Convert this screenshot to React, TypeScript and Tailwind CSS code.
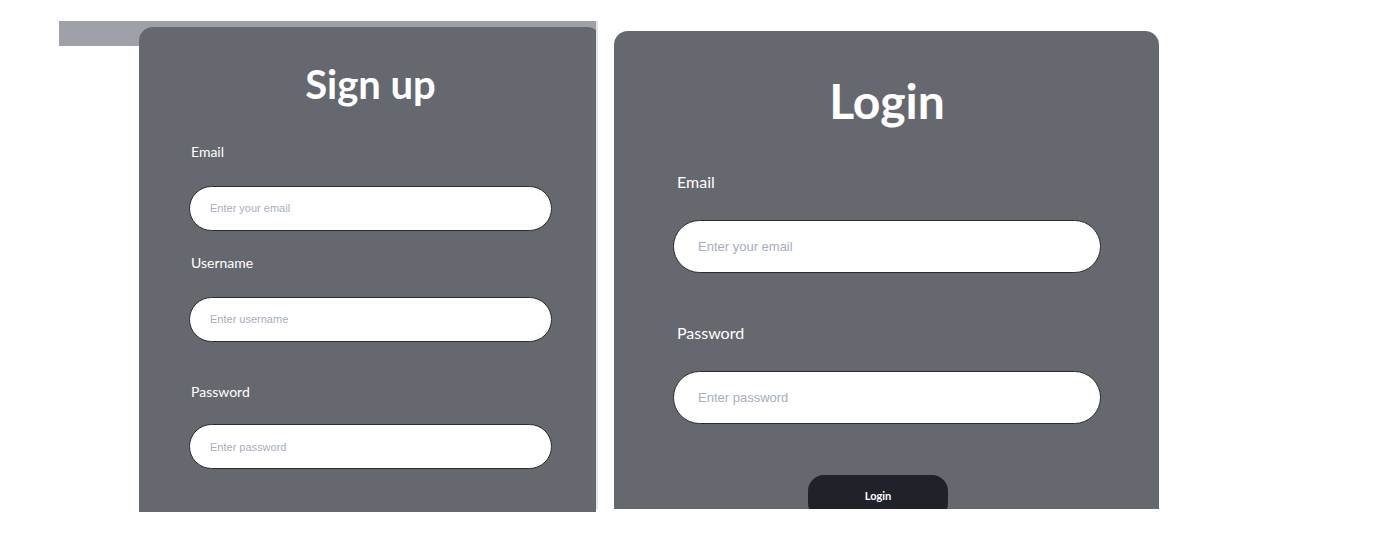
import React from "react";

const lato = { fontFamily: "Lato, 'Noto Sans', sans-serif" };

export default function App() {
  return (
    <div className="min-h-[542px] w-[1381px] bg-white flex items-start pl-[59px] pt-[21px]" style={lato}>
      {/* Sign up panel (cropped screenshot) */}
      <div className="w-[537px] h-[491px] overflow-hidden flex flex-col shrink-0">
        <div className="h-[25px] w-full bg-[#9ea2a8] shrink-0" />
        <div className="ml-[80px] -mt-[19px] w-[462px] flex-1 bg-[#66686f] rounded-tl-[14px] rounded-tr-[14px] flex flex-col pt-[33px] pl-[50px] pr-[49px] font-['Lato',sans-serif]">
          <h1 className="shrink-0 text-center text-white font-bold text-[40px] leading-[1.2] m-0">Sign up</h1>
          <label className="shrink-0 mt-[36px] ml-[2px] text-white text-[14px] leading-[1.2]">Email</label>
          <input
            readOnly
            placeholder="Enter your email"
            className="shrink-0 mt-[25px] h-[45px] w-[363px] rounded-full bg-white border-[1.5px] border-[#2b2c30] pl-[20px] text-[11px] outline-none placeholder:text-[#a6aebd] font-['Liberation_Sans',Arial,sans-serif]"
          />
          <label className="shrink-0 mt-[24px] ml-[2px] text-white text-[14px] leading-[1.2]">Username</label>
          <input
            readOnly
            placeholder="Enter username"
            className="shrink-0 mt-[25px] h-[45px] w-[363px] rounded-full bg-white border-[1.5px] border-[#2b2c30] pl-[20px] text-[11px] outline-none placeholder:text-[#a6aebd] font-['Liberation_Sans',Arial,sans-serif]"
          />
          <label className="shrink-0 mt-[42px] ml-[2px] text-white text-[14px] leading-[1.2]">Password</label>
          <input
            readOnly
            placeholder="Enter password"
            className="shrink-0 mt-[24px] h-[45px] w-[363px] rounded-full bg-white border-[1.5px] border-[#2b2c30] pl-[20px] text-[11px] outline-none placeholder:text-[#a6aebd] font-['Liberation_Sans',Arial,sans-serif]"
          />
        </div>
      </div>

      <div className="w-[2px] h-[488px] bg-[#e4e5e7] shrink-0" />

      {/* Login panel */}
      <div className="ml-[16px] mt-[10px] w-[545px] h-[478px] overflow-hidden rounded-t-[14px] bg-[#66686f] flex flex-col pt-[41px] pl-[59px] shrink-0 font-['Lato',sans-serif]">
        <h1 className="shrink-0 text-center text-white font-bold text-[48px] leading-[1.2] m-0 w-[428px]">Login</h1>
        <label className="shrink-0 mt-[42px] ml-[4px] text-white text-[16px] leading-[1.2]">Email</label>
        <input
          readOnly
          placeholder="Enter your email"
          className="shrink-0 mt-[29px] h-[53px] w-[428px] rounded-full bg-white border-[1.5px] border-[#2b2c30] pl-[24px] text-[13px] outline-none placeholder:text-[#a6aebd] font-['Liberation_Sans',Arial,sans-serif]"
        />
        <label className="shrink-0 mt-[50px] ml-[4px] text-white text-[16px] leading-[1.2]">Password</label>
        <input
          readOnly
          placeholder="Enter password"
          className="shrink-0 mt-[29px] h-[53px] w-[428px] rounded-full bg-white border-[1.5px] border-[#2b2c30] pl-[24px] text-[13px] outline-none placeholder:text-[#a6aebd] font-['Liberation_Sans',Arial,sans-serif]"
        />
        <button className="mt-[51px] ml-[135px] w-[140px] h-[44px] shrink-0 rounded-[16px] bg-[#1f2229] text-white font-bold text-[11px] flex items-start justify-center pt-[13px]">
          Login
        </button>
      </div>
    </div>
  );
}
